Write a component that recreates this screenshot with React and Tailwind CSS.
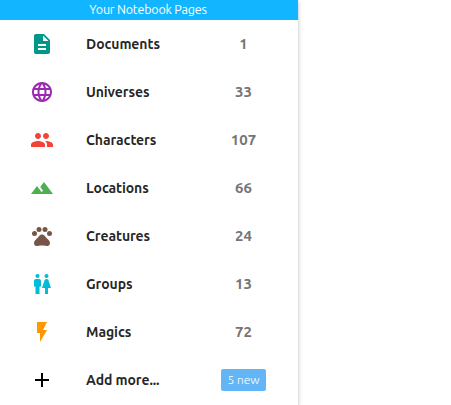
import { MdDescription, MdLanguage, MdGroup, MdTerrain, MdPets, MdWc, MdFlashOn, MdAdd } from "react-icons/md";

const pages = [
  { name: "Documents", count: "1", Icon: MdDescription, color: "text-[#009688]" },
  { name: "Universes", count: "33", Icon: MdLanguage, color: "text-[#9c27b0]" },
  { name: "Characters", count: "107", Icon: MdGroup, color: "text-[#f44336]" },
  { name: "Locations", count: "66", Icon: MdTerrain, color: "text-[#4caf50]" },
  { name: "Creatures", count: "24", Icon: MdPets, color: "text-[#795548]" },
  { name: "Groups", count: "13", Icon: MdWc, color: "text-[#00bcd4]" },
  { name: "Magics", count: "72", Icon: MdFlashOn, color: "text-[#ff9800]" },
  { name: "Add more...", badge: "5 new", Icon: MdAdd, color: "text-black" },
];

export default function App() {
  return (
    <div className="h-[405px] w-[451px] overflow-hidden bg-white font-['Ubuntu','Noto_Sans',sans-serif]">
      <aside className="h-full w-[298px] bg-white shadow-[0_2px_2px_0_rgba(0,0,0,0.14),0_3px_1px_-2px_rgba(0,0,0,0.12),0_1px_5px_0_rgba(0,0,0,0.2)]">
        <header className="h-5 bg-[#12b5ff] pr-[2px] text-center text-[12.5px] leading-[19px] text-white">
          <span className="tracking-[-0.2px]">Your Notebook Pages</span>
        </header>
        <nav>
          {pages.map(({ name, count, badge, Icon, color }) => (
            <a key={name} className="flex h-12 items-center pr-8 pl-[30px]">
              <Icon className={`size-6 shrink-0 ${color}`} />
              <span className="ml-8 text-[14px] leading-[22px] font-semibold tracking-[-0.08px] text-black/87">{name}</span>
              {badge ? (
                <span className="ml-auto h-[22px] w-[45px] rounded-[2px] bg-[#64b5f6] text-center text-[12px] leading-[22px] font-light text-white">{badge}</span>
              ) : (
                <span className="ml-auto w-[45px] text-center text-[15px] leading-[22px] font-semibold text-[#757575]">{count}</span>
              )}
            </a>
          ))}
        </nav>
      </aside>
    </div>
  );
}
